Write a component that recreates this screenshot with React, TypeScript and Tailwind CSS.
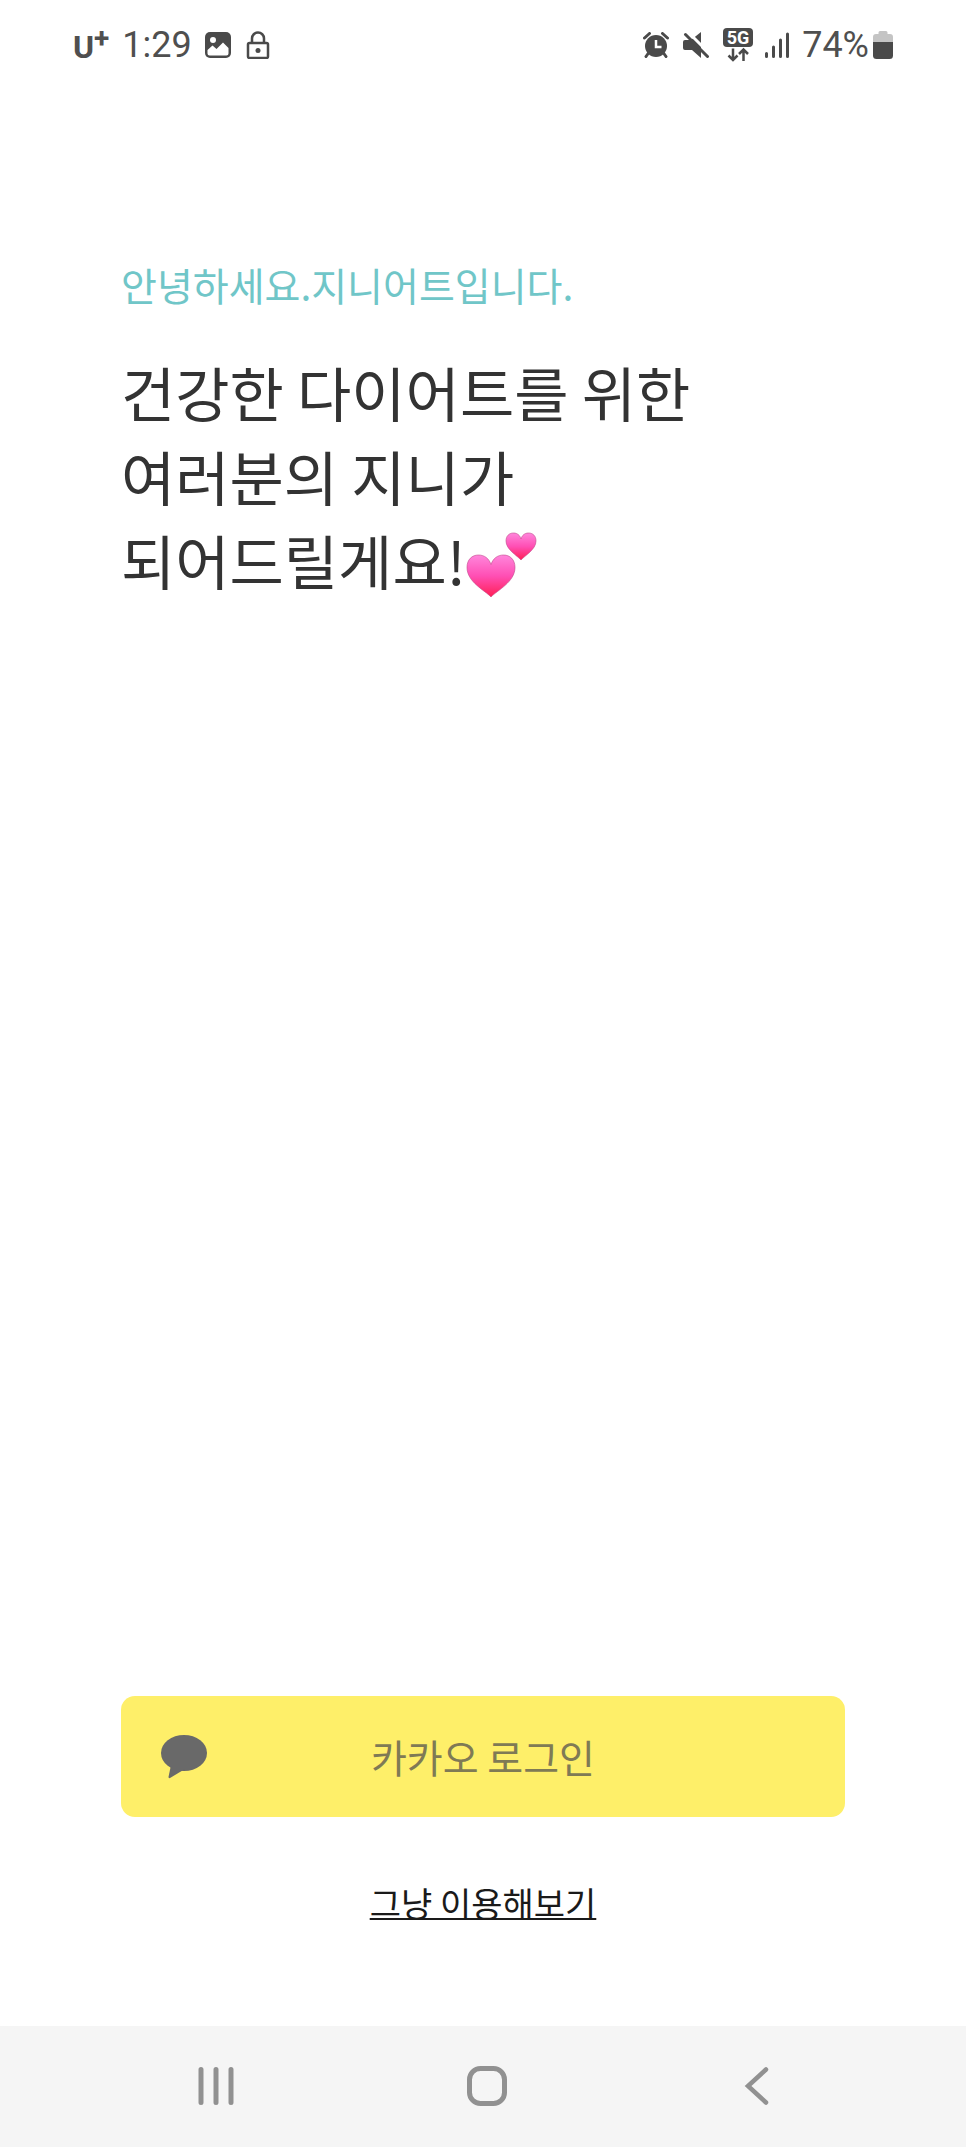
const koreanFont = "font-['Noto_Sans_CJK_KR',sans-serif]"

function ImageIcon() {
  return (
    <svg width="26" height="26" viewBox="0 0 26 26">
      <rect width="26" height="26" rx="5" fill="#4a4a4a" />
      <circle cx="8" cy="8" r="3" fill="#fff" />
      <path d="M2.500 18 7.500 13.500l4 3.500L18 10.500l5.500 5.500v5.500q0 2-2 2h-17q-2 0-2-2z" fill="#fff" />
    </svg>
  )
}

function LockIcon() {
  return (
    <svg width="28" height="28" viewBox="1 0 28 28" fill="none" stroke="#4a4a4a" strokeWidth="2.500">
      <rect x="5" y="12" width="20" height="15" rx="1.500" />
      <path d="M9 12V7.500a6 6 0 0 1 12 0V12" />
      <circle cx="15" cy="19.500" r="2.500" fill="#4a4a4a" stroke="none" />
    </svg>
  )
}

function AlarmIcon() {
  return (
    <svg width="28" height="26" viewBox="0 0 28 26">
      <circle cx="13" cy="14" r="11" fill="#4a4a4a" />
      <path d="M1.500 6 6.500 1.500M24.500 6l-5-4.500M5.500 21l-2.500 3.500M20.500 21l2.500 3.500" stroke="#4a4a4a" strokeWidth="3" strokeLinecap="round" />
      <path d="M13 8v7h5.500" stroke="#fff" strokeWidth="2.500" fill="none" />
    </svg>
  )
}

function MuteIcon() {
  return (
    <svg width="28" height="26" viewBox="0 0 28 26">
      <path d="M0 10q0-2 2-2h6l10-8v26l-9-8H2q-2 0-2-2z" fill="#4a4a4a" />
      <path d="M4 -1 27 22" stroke="#fff" strokeWidth="3" />
      <path d="M2.500 2.500 24.500 24.500" stroke="#4a4a4a" strokeWidth="3" strokeLinecap="round" />
    </svg>
  )
}

function FiveGIcon() {
  return (
    <svg width="30" height="34" viewBox="0 0 30 34">
      <rect width="30" height="19" rx="4" fill="#4a4a4a" />
      <text x="15" y="16" textAnchor="middle" fill="#fff" className="font-['Roboto',sans-serif] text-[18px] font-bold">
        5G
      </text>
      <path d="M10 20.500V32M5.500 27.500l4.500 4.500 4.500-4.500M20.500 33V21.500M16 26l4.500-4.500L25 26" fill="none" stroke="#4a4a4a" strokeWidth="2.500" />
    </svg>
  )
}

function SignalIcon() {
  return (
    <svg width="25" height="26" viewBox="1 0 25 26" stroke="#4a4a4a" strokeWidth="3" strokeLinecap="round">
      <path d="M2.500 21.500v3M9.500 15v9.500M16.500 8v16.500M23.500 2v22.500" />
    </svg>
  )
}

function BatteryIcon() {
  return (
    <svg width="20" height="28" viewBox="0 0 20 28">
      <path d="M0 12V6q0-3 3-3h2.500V1.500Q5.500 0 7 0h6q1.500 0 1.500 1.500V3H17q3 0 3 3v6z" fill="#c4c4c4" />
      <path d="M0 11h20v13.500q0 3.500-3.500 3.500h-13Q0 28 0 24.500z" fill="#4a4a4a" />
    </svg>
  )
}

function StatusBar() {
  return (
    <header className="flex h-[90px] items-center justify-between px-[73px] font-['Roboto',sans-serif] text-[36px] leading-none text-[#4f4f4f]">
      <div className="flex items-center gap-[13px]">
        <span className="flex items-center font-bold">
          <span className="pt-1 text-[32px]">U</span>
          <span className="pb-3 text-[28px]">+</span>
        </span>
        <span>1:29</span>
        <ImageIcon />
        <LockIcon />
      </div>
      <div className="flex items-center gap-3">
        <AlarmIcon />
        <MuteIcon />
        <FiveGIcon />
        <SignalIcon />
        <span className="flex items-center gap-1">
          74%
          <BatteryIcon />
        </span>
      </div>
    </header>
  )
}

function TwoHearts() {
  return (
    <svg className="inline-block align-top" width="72" height="84" viewBox="3 -6 72 84" role="img" aria-label="💕">
      <defs>
        <linearGradient id="heart" x1="0" y1="0" x2="0" y2="1">
          <stop offset="0" stopColor="#ff86dc" />
          <stop offset="0.5" stopColor="#ff4fb4" />
          <stop offset="1" stopColor="#ff1f55" />
        </linearGradient>
      </defs>
      <g fill="url(#heart)" stroke="#c2488c" strokeOpacity="0.6">
        <path d="M28 73C22 66.500 4 58 4 43.500 4 35.500 9 31 15.500 31c6 0 10.500 3.500 12.500 9.500 2-6 6.500-9.500 12.500-9.500C47 31 52 35.500 52 43.500 52 58 34 66.500 28 73z" />
        <path d="M58 36c-4-4.500-15-10.500-15-19 0-5 3-8 7.500-8 3.800 0 6.500 2.300 7.500 6 1-3.700 3.700-6 7.500-6 4.500 0 7.500 3 7.500 8 0 8.500-11 14.500-15 19z" />
      </g>
    </svg>
  )
}

function TalkIcon() {
  return (
    <svg width="46" height="44" viewBox="0 0 46 44" fill="#696969">
      <ellipse cx="23" cy="18" rx="23" ry="18" />
      <path d="M10 30 7.500 42q0 1.500 1.500 1L24 34z" />
    </svg>
  )
}

function NavigationBar() {
  return (
    <nav className="flex h-[121px] items-center justify-between bg-[#f5f5f5] pr-[164px] pb-0.5 pl-[171px]">
      <button aria-label="Recents" className="flex w-[90px] justify-center">
        <svg width="38" height="40" viewBox="0 0 38 40" stroke="#919191" strokeWidth="5" strokeLinecap="round">
          <path d="M4 3.500v33M19 3.500v33M34 3.500v33" />
        </svg>
      </button>
      <button aria-label="Home" className="flex w-[90px] justify-center">
        <svg width="42" height="42" viewBox="0 0 42 42" fill="none" stroke="#919191" strokeWidth="5">
          <rect x="3.500" y="3.500" width="35" height="35" rx="11" />
        </svg>
      </button>
      <button aria-label="Back" className="flex w-[90px] justify-center">
        <svg width="26" height="40" viewBox="0 0 26 40" fill="none" stroke="#919191" strokeWidth="4.500" strokeLinecap="round">
          <path d="M22 3.500 4 20l18 16.500" />
        </svg>
      </button>
    </nav>
  )
}

export default function App() {
  return (
    <div className={`flex min-h-screen flex-col bg-white ${koreanFont}`}>
      <StatusBar />

      <main className="flex flex-1 flex-col justify-between px-[121px] pt-[164px] pb-24">
        <div>
          <p className="text-[39px] leading-[60px] text-[#70c6c8]">안녕하세요.지니어트입니다.</p>
          <h1 className="mt-9 text-[59px] leading-[84px] text-[#333]">
            건강한 다이어트를 위한
            <br />
            여러분의 지니가
            <br />
            되어드릴게요!
            <TwoHearts />
          </h1>
        </div>

        <div className="flex flex-col items-center gap-[59px]">
          <button className="grid h-[121px] w-full grid-cols-[46px_1fr_46px] items-center rounded-[14px] bg-[#feef69] px-10 text-[39px] text-[#7f7a55]">
            <TalkIcon />
            <span>카카오 로그인</span>
          </button>
          <a href="#" className="text-[34px] leading-[54px] text-[#1a1a1a] underline decoration-2">
            그냥 이용해보기
          </a>
        </div>
      </main>

      <NavigationBar />
    </div>
  )
}
